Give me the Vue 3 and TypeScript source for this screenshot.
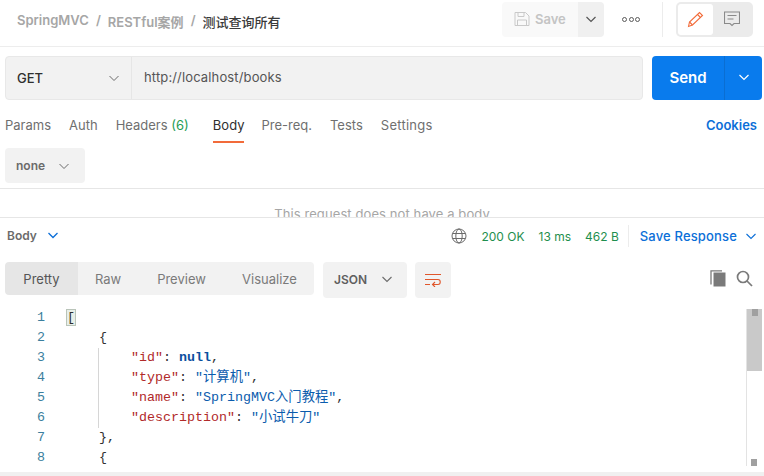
<script setup lang="ts">
interface Part { t: string; c: string }
const lines: Part[][] = [
  [{ t: '[', c: 'bracket' }],
  [{ t: '    {', c: 'p' }],
  [{ t: '        ', c: 'p' }, { t: '"id"', c: 'k' }, { t: ': ', c: 'p' }, { t: 'null', c: 'n' }, { t: ',', c: 'p' }],
  [{ t: '        ', c: 'p' }, { t: '"type"', c: 'k' }, { t: ': ', c: 'p' }, { t: '"计算机"', c: 's' }, { t: ',', c: 'p' }],
  [{ t: '        ', c: 'p' }, { t: '"name"', c: 'k' }, { t: ': ', c: 'p' }, { t: '"SpringMVC入门教程"', c: 's' }, { t: ',', c: 'p' }],
  [{ t: '        ', c: 'p' }, { t: '"description"', c: 'k' }, { t: ': ', c: 'p' }, { t: '"小试牛刀"', c: 's' }],
  [{ t: '    },', c: 'p' }],
  [{ t: '    {', c: 'p' }],
]
const tabs = ['Params', 'Auth']
const tabsAfter = ['Pre-req.', 'Tests', 'Settings']
</script>

<template>
  <div class="app">
    <header class="top">
      <div class="crumbs">
        <span>SpringMVC</span><span class="sl">/</span><span>RESTful案例</span><span class="sl">/</span><span class="cur">测试查询所有</span>
      </div>
      <div class="top-actions">
        <div class="save-group">
          <div class="save">
            <svg width="16" height="16" viewBox="0 0 16 16" fill="none" stroke="#c9c9c9" stroke-width="1"><path d="M1 1.500h10.500l3.500 3.500v9.500H1z"/><path d="M4 1.500v4h6v-4M3.500 14.500v-5.500h9v5.500"/></svg>
            <span>Save</span>
          </div>
          <div class="save-arrow"><svg width="12" height="12" viewBox="0 0 12 12" fill="none" stroke="#555" stroke-width="1.200"><path d="M1.500 4l4.500 4.500L10.500 4"/></svg></div>
        </div>
        <div class="more"><i></i><i></i><i></i></div>
        <div class="vsep"></div>
        <div class="mode">
          <div class="mode-on">
            <svg width="17" height="17" viewBox="0 0 17 17" fill="none" stroke="#f26b3a" stroke-width="1.100"><path d="M1.500 15.500l1-4.500L12.500 1.500l3 3-10 9.500z"/><path d="M10.500 3.500l3 3M2.500 11l3 3"/></svg>
          </div>
          <div class="mode-off">
            <svg width="16" height="16" viewBox="0 0 16 16" fill="none" stroke="#8a8a8a" stroke-width="1.100"><path d="M.5 1h15v11.500h-5.500l-2 2-2-2H.5z"/><path d="M3.500 4.500h9M3.500 8h6"/></svg>
          </div>
        </div>
      </div>
    </header>

    <div class="req">
      <div class="url-box">
        <div class="method"><span>GET</span>
          <svg width="12" height="12" viewBox="0 0 12 12" fill="none" stroke="#6b6b6b" stroke-width="1"><path d="M1.500 4l4.500 4.500L10.500 4"/></svg>
        </div>
        <div class="url">http://localhost/books</div>
      </div>
      <div class="send">
        <div class="send-main"><span>Send</span></div>
        <div class="send-arrow"><svg width="12" height="12" viewBox="0 0 12 12" fill="none" stroke="#fff" stroke-width="1.200"><path d="M1.500 4l4.500 4.500L10.500 4"/></svg></div>
      </div>
    </div>

    <nav class="tabs">
      <span v-for="t in tabs" :key="t" class="tab">{{ t }}</span>
      <span class="tab">Headers <em>(6)</em></span>
      <span class="tab active">Body</span>
      <span v-for="t in tabsAfter" :key="t" class="tab">{{ t }}</span>
      <span class="cookies">Cookies</span>
    </nav>

    <div class="none-row">
      <div class="none"><span>none</span>
        <svg width="12" height="12" viewBox="0 0 12 12" fill="none" stroke="#6b6b6b" stroke-width="1"><path d="M1.500 4l4.500 4.500L10.500 4"/></svg>
      </div>
    </div>

    <div class="empty"><span>This request does not have a body</span></div>

    <div class="res-head">
      <div class="res-title"><span>Body</span>
        <svg width="12" height="12" viewBox="0 0 12 12" fill="none" stroke="#0c6fd8" stroke-width="1.300"><path d="M1.500 4l4.500 4.500L10.500 4"/></svg>
      </div>
      <div class="res-meta">
        <svg class="globe" width="16" height="16" viewBox="0 0 16 16" fill="none" stroke="#6b6b6b" stroke-width="1"><circle cx="8" cy="8" r="7"/><ellipse cx="8" cy="8" rx="3.200" ry="7"/><path d="M1.500 5.500h13M1.500 10.500h13"/></svg>
        <span class="ok">200 OK</span><span class="ok">13 ms</span><span class="ok">462 B</span>
        <div class="vsep2"></div>
        <span class="save-res">Save Response</span>
        <svg width="12" height="12" viewBox="0 0 12 12" fill="none" stroke="#0c6fd8" stroke-width="1.100"><path d="M1.500 4l4.500 4.500L10.500 4"/></svg>
      </div>
    </div>

    <div class="toolbar">
      <div class="seg">
        <span class="seg-item on">Pretty</span>
        <span class="seg-item raw">Raw</span>
        <span class="seg-item prev">Preview</span>
        <span class="seg-item vis">Visualize</span>
      </div>
      <div class="fmt"><span>JSON</span>
        <svg width="12" height="12" viewBox="0 0 12 12" fill="none" stroke="#6b6b6b" stroke-width="1.100"><path d="M1.500 4l4.500 4.500L10.500 4"/></svg>
      </div>
      <div class="wrap">
        <svg width="16" height="14" viewBox="0 0 16 14" fill="none" stroke="#e0562b" stroke-width="1.100"><path d="M0 1.500h16M0 11.500h5M0 6.500h13c3 0 3 5 0 5H7.500"/><path d="M10 9l-2.500 2.500 2.500 2.500"/></svg>
      </div>
      <div class="tools">
        <svg width="16" height="17" viewBox="0 0 16 17"><path d="M3.500 2.500h12v14h-12z" fill="#7a7a7a"/><path d="M1 14.500V.8h11" fill="none" stroke="#7a7a7a" stroke-width="1.300"/></svg>
        <svg width="17" height="17" viewBox="0 0 17 17" fill="none" stroke="#7a7a7a" stroke-width="1.700"><circle cx="7" cy="7" r="5.500"/><path d="M11 11l5 5"/></svg>
      </div>
    </div>

    <div class="editor">
      <div class="code">
        <div v-for="(l, i) in lines" :key="i" class="line">
          <span class="num">{{ i + 1 }}</span>
          <span class="txt"><span v-for="(p, j) in l" :key="j" :class="p.c">{{ p.t }}</span></span>
        </div>
      </div>
      <div class="guide"></div>
      <div class="scroll"><div class="thumb"><i></i></div><b></b></div>
    </div>
    <div class="bottom"></div>
  </div>
</template>

<style>
html, body { margin: 0; background: #fff; overflow: hidden; }
</style>

<style scoped>
.app { width: 764px; height: 476px; overflow: hidden; font-family: Inter, "Noto Sans CJK SC", sans-serif; font-size: 13px; color: #6b6b6b; background: #fff; display: flex; flex-direction: column; }
.top { height: 46px; box-sizing: content-box; border-bottom: 1px solid #ededed; display: flex; align-items: center; justify-content: space-between; padding-left: 17px; flex: none; }
.crumbs { display: flex; font-size: 13px; font-weight: 600; color: #a6a6a6; margin-top: -3px; }
.sl { margin: 0 7px; }
.cur { color: #3a3a3a; font-weight: 500; font-size: 13px; }
.top-actions { display: flex; align-items: center; margin-right: 11px; }
.save-group { display: flex; height: 35px; margin-top: -8px; }
.save { width: 76px; background: #f9f9f9; border-radius: 4px 0 0 4px; display: flex; align-items: center; gap: 5px; padding-left: 12px; box-sizing: border-box; color: #c4c4c4; font-weight: 600; font-size: 13px; }
.save-arrow { width: 26px; background: #f0f0f0; border-radius: 0 4px 4px 0; display: flex; align-items: center; justify-content: center; }
.more { display: flex; gap: 1.500px; width: 54px; margin-right: 4px; justify-content: center; margin-top: -8px; }
.more i { width: 3px; height: 3px; border: 1px solid #5a5a5a; border-radius: 50%; }
.vsep { width: 1px; height: 35px; background: #ececec; margin-top: -8px; margin-right: 13px; }
.mode { width: 77px; height: 35px; margin-top: -8px; background: #ebebeb; border-radius: 5px; display: flex; box-sizing: border-box; padding: 2px; }
.mode-on { width: 35px; background: #fff; border-radius: 3px; display: flex; align-items: center; justify-content: center; }
.mode-off { flex: 1; display: flex; align-items: center; justify-content: center; }
.req { display: flex; padding: 9px 2px 0 5px; gap: 9px; height: 44px; flex: none; }
.url-box { flex: 1; display: flex; height: 44px; box-sizing: border-box; background: #f2f2f2; border: 1px solid #e8e8e8; border-radius: 4px; }
.method { width: 126px; box-sizing: border-box; border-right: 1px solid #e6e6e6; display: flex; align-items: center; justify-content: space-between; padding: 0 11px 0 11px; color: #2f2f2f; font-size: 13px; font-weight: 500; }
.url { display: flex; align-items: center; padding-left: 12px; font-size: 13px; letter-spacing: .14px; color: #555; margin-top: -2px; }
.send { width: 110px; height: 44px; background: #097bed; border-radius: 4px; display: flex; color: #fff; }
.send-main { width: 73px; border-right: 1px solid #0a6ed2; display: flex; align-items: center; justify-content: center; font-size: 15px; font-weight: 600; padding-bottom: 2px; box-sizing: border-box; }
.send-arrow { flex: 1; display: flex; align-items: center; justify-content: center; padding-bottom: 2px; }
.tabs { height: 42px; display: flex; align-items: flex-start; padding: 0 5px; flex: none; position: relative; }
.tab { margin-right: 18px; font-size: 13px; color: #6f6f6f; padding-top: 17px; height: 25px; line-height: 16px; white-space: nowrap; box-sizing: content-box; }
.tab em { font-style: normal; color: #1f9d55; }
.tab:nth-child(3) { margin-right: 24px; }
.tab.active { color: #2f2f2f; border-bottom: 2px solid #f26b3a; height: 24px; margin-right: 17px; }
.tab:nth-child(7) { letter-spacing: .25px; }
.cookies { margin-left: auto; padding-top: 17px; color: #0c6fd8; font-weight: 600; font-size: 13px; line-height: 16px; margin-right: 2px; }
.none-row { height: 47px; padding: 6px 0 0 5px; box-sizing: border-box; border-bottom: 1px solid #e6e6e6; flex: none; }
.none { width: 80px; height: 35px; background: #f2f2f2; border-radius: 4px; display: flex; align-items: center; box-sizing: border-box; padding: 0 15px 0 11px; justify-content: space-between; font-size: 12px; font-weight: 600; color: #6b6b6b; }
.empty { height: 29px; overflow: hidden; border-bottom: 1px solid #e6e6e6; text-align: center; flex: none; padding-top: 17px; box-sizing: border-box; font-size: 13px; letter-spacing: .1px; color: #a6a6a6; line-height: 16px; }
.res-head { height: 38px; flex: none; display: flex; align-items: center; justify-content: space-between; padding: 0 7px 2px; box-sizing: border-box; }
.res-title { display: flex; align-items: center; gap: 10px; font-size: 12px; font-weight: 600; color: #6b6b6b; margin-top: -2px; }
.res-meta { display: flex; align-items: center; }
.globe { margin-right: 14px; }
.ok { color: #1f8f4e; font-size: 12px; margin-right: 14px; }
.ok:nth-of-type(3) { margin-right: 9px; }
.vsep2 { width: 1px; height: 22px; background: #ececec; margin-right: 11px; }
.save-res { color: #0c6fd8; font-size: 13px; font-weight: 500; letter-spacing: .16px; margin-right: 8px; }
.toolbar { display: flex; align-items: flex-start; padding: 6px 0 0 5px; height: 52px; box-sizing: border-box; flex: none; position: relative; }
.seg { width: 309px; height: 33px; background: #f2f2f2; border-radius: 4px; display: flex; align-items: center; font-size: 13px; color: #7a7a7a; overflow: hidden; }
.seg-item { height: 100%; display: flex; align-items: center; justify-content: center; }
.seg-item.on { width: 73px; background: #e6e6e6; border-radius: 4px 0 0 4px; color: #555; }
.raw { width: 60px; }
.prev { width: 87px; }
.vis { width: 89px; }
.fmt { width: 84px; height: 36px; margin-left: 9px; background: #f2f2f2; border-radius: 4px; display: flex; align-items: center; justify-content: space-between; box-sizing: border-box; padding: 0 14px 2px 11px; font-size: 12px; font-weight: 600; color: #5f5f5f; }
.wrap { width: 36px; height: 36px; margin-left: 8px; background: #f2f2f2; border-radius: 4px; display: flex; align-items: center; justify-content: center; }
.tools { margin-left: auto; display: flex; gap: 10px; padding-top: 8px; margin-right: 11px; }
.editor { position: relative; height: 164px; flex: none; overflow: hidden; }
.code { font-family: "Liberation Mono", "Noto Sans CJK SC", monospace; font-size: 13.330px; line-height: 20px; }
.line { display: flex; height: 20px; }
.num { width: 45px; text-align: right; color: #3b7f9e; flex: none; }
.txt { margin-left: 22px; white-space: pre; color: #2f2f2f; }
.bracket { outline: 1px solid #b9c4b9; background: #e8efe8; }
.k { color: #b12a2a; }
.s { color: #0b5cad; }
.n { color: #0b4f9e; font-weight: 700; }
.guide { position: absolute; left: 98px; top: 40px; width: 1px; height: 80px; background: #d6d6d6; }
.scroll { position: absolute; left: 746px; top: 1px; width: 16px; height: 157px; border-left: 1px solid #e3e3e3; box-sizing: border-box; }
.thumb { height: 62px; background: #c9c9c9; display: flex; justify-content: center; }
.thumb i { width: 6px; height: 7px; background: #a0a0a0; }
.scroll b { position: absolute; left: 4px; bottom: 0; width: 6px; height: 7px; background: #a0a0a0; }
.bottom { height: 4px; background: #f0f0f0; flex: none; }
</style>
